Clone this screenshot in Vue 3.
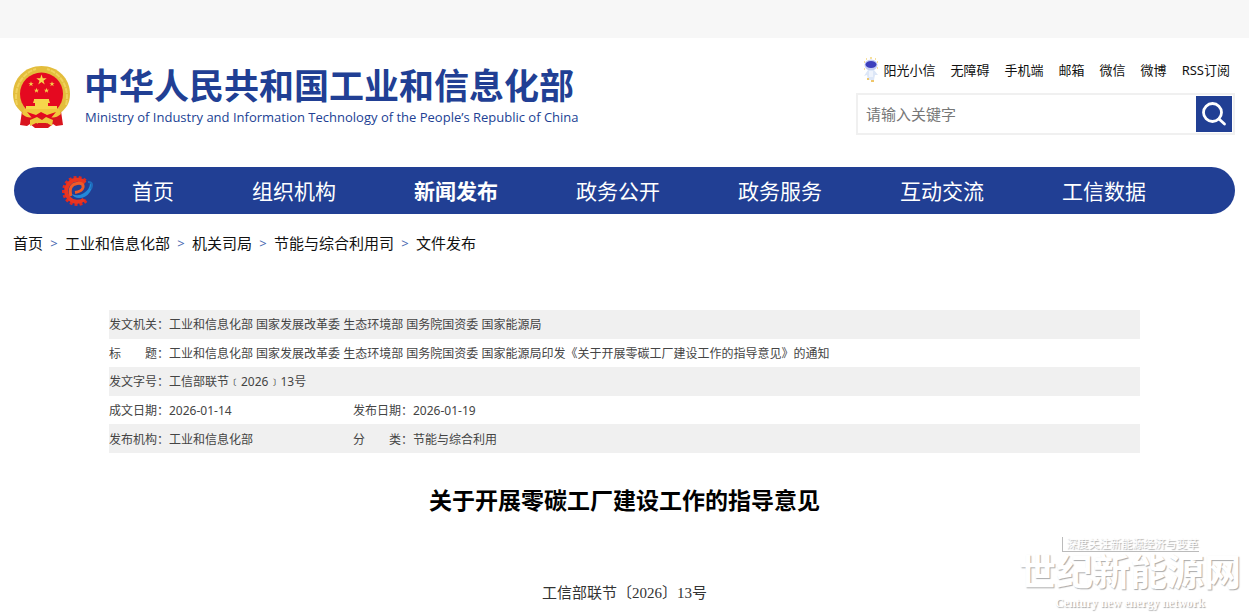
<script setup>
import { ref } from 'vue'

const keyword = ref('')
const tools = ['无障碍', '手机端', '邮箱', '微信', '微博', 'RSS订阅']
const menu = ['首页', '组织机构', '新闻发布', '政务公开', '政务服务', '互动交流', '工信数据']
const active = '新闻发布'
const crumbs = ['首页', '工业和信息化部', '机关司局', '节能与综合利用司', '文件发布']
const teeth = Array.from({ length: 13 }, (_, i) => 52 + i * 21)
const star = 'M0-1L.23-.31H.95L.36.12.59.81 0 .38-.59.81-.36.12-.95-.31H-.23Z'
const rows = [
  [['发文机关：', '工业和信息化部 国家发展改革委 生态环境部 国务院国资委 国家能源局']],
  [['标　　题：', '工业和信息化部 国家发展改革委 生态环境部 国务院国资委 国家能源局印发《关于开展零碳工厂建设工作的指导意见》的通知']],
  [['发文字号：', '工信部联节﹝2026﹞13号']],
  [['成文日期：', '2026-01-14'], ['发布日期：', '2026-01-19']],
  [['发布机构：', '工业和信息化部'], ['分　　类：', '节能与综合利用']],
]
</script>

<template>
  <div class="page">
    <div class="topbar"></div>
    <header class="header">
      <a class="brand" href="#">
        <svg class="emblem" viewBox="0 0 57 62" aria-hidden="true">
          <path d="M9 45 7 59l7 1 3-2 5 4h13l5-4 3 2 7-1-2-14z" fill="#d9141e" />
          <path d="M28.500 0C12 0 0 12.500 0 28c0 9 4 15 10 19h37c6-4 10-10 10-19C57 12.500 45 0 28.500 0z" fill="#e3bd3c" />
          <path d="M4 39C0 22 9 7 23 3M53 39C57 22 48 7 34 3" fill="none" stroke="#f0d25c" stroke-width="2" stroke-dasharray="5 1" />
          <circle cx="28.500" cy="28" r="21.500" fill="#e50920" />
          <g fill="#f6d64b">
            <path :d="star" transform="translate(28.500 14) scale(5.500)" />
            <path :d="star" transform="translate(18 18) scale(2.800)" />
            <path :d="star" transform="translate(39 18) scale(2.800)" />
            <path :d="star" transform="translate(23.500 24.500) scale(2.800)" />
            <path :d="star" transform="translate(33.500 24.500) scale(2.800)" />
            <path d="M21 34v-1h15v1l1 3h-2v3h9v3H13v-3h9v-3h-2z" />
          </g>
          <path d="M11 43h35l2 5q-7 6-13 2-6-4-13 0-6 4-13-2z" fill="#f0c83d" />
          <path d="m14 46 9 3 5-3 6 3 9-3-5 6-10-2-9 2z" fill="#e50920" />
          <path d="m17 54 7-3 5 3 4-3 7 3-1 6-5-3-5 2-6-2-6 3z" fill="#eec63c" />
          <path d="M25 57h8v4h-8z" fill="#d9141e" />
        </svg>
        <span class="names">
          <span class="name-zh">中华人民共和国工业和信息化部</span>
          <span class="name-en">Ministry of Industry and Information Technology of the People’s Republic of China</span>
        </span>
      </a>
      <div class="aside">
        <nav class="tools" aria-label="工具">
          <a class="mascot-link" href="#">
            <svg class="mascot" viewBox="0 0 16 26" aria-hidden="true">
              <path d="M1 5h1M3 2h1M7 1h2M12 2h1M14 5h1M1 12h1M14 11h1" stroke="#f3d67c" stroke-width="1.500" />
              <ellipse cx="8" cy="8" rx="6.500" ry="5.500" fill="#c5cdf3" />
              <ellipse cx="8" cy="7.500" rx="5.500" ry="3.500" fill="#3c3fbd" />
              <path d="M5 13h6l4 5-3 0-1 5H5l-1-5-3 1z" fill="#dce6f7" />
              <path d="M6 14v6h4v-6" fill="#eef3fc" />
              <path d="M4 22h2M8 24h3" stroke="#efc66a" stroke-width="2" />
            </svg>
            阳光小信</a>
          <a v-for="t in tools" :key="t" href="#">{{ t }}</a>
        </nav>
        <form class="search" role="search" @submit.prevent>
          <input v-model="keyword" type="text" aria-label="请输入关键字" placeholder="请输入关键字" />
          <button type="submit" aria-label="搜索">
            <svg viewBox="0 0 36 36" aria-hidden="true">
              <g fill="none" stroke="#fff" stroke-width="2.800" stroke-linecap="round">
                <circle cx="16.500" cy="16.500" r="9" />
                <path d="m23 23 5.500 5" />
              </g>
            </svg>
          </button>
        </form>
      </div>
    </header>

    <nav class="menu" aria-label="主导航">
      <svg class="gear" viewBox="0 0 32 32" aria-hidden="true">
        <g fill="#e02a20">
          <rect v-for="a in teeth" :key="a" x="27" y="14.500" width="4" height="3" :transform="`rotate(${a} 16 16)`" />
        </g>
        <path d="M23 24.500A11 11 0 1 1 24 8" fill="none" stroke="#ea3520" stroke-width="4" />
        <path d="M10 21Q7 10 16 8.500q7-1 6 4-1 4-8 5" fill="none" stroke="#f05a28" stroke-width="3" />
        <path d="M11 19q6 3 12-1 6-4 6-10 4 3 0 9-4 6-11 6-5 0-7-4z" fill="#2389d8" />
        <path d="M27 7q6 0 3 7" fill="none" stroke="#1e6dbd" stroke-width="2" />
      </svg>
      <a v-for="m in menu" :key="m" href="#" :class="{ active: m === active }">{{ m }}</a>
    </nav>

    <nav class="crumbs" aria-label="面包屑">
      <template v-for="(c, i) in crumbs" :key="c">
        <span v-if="i" class="sep">&gt;</span>
        <a href="#">{{ c }}</a>
      </template>
    </nav>

    <main class="article">
      <table class="info">
        <colgroup>
          <col class="c-label" />
          <col class="c-value" />
          <col class="c-label" />
          <col />
        </colgroup>
        <tbody>
          <tr v-for="row in rows" :key="row[0][0]">
            <template v-for="[k, v] in row" :key="k">
              <th scope="row">{{ k }}</th>
              <td :colspan="row.length === 1 ? 3 : 1">{{ v }}</td>
            </template>
          </tr>
        </tbody>
      </table>
      <h1>关于开展零碳工厂建设工作的指导意见</h1>
      <p class="docno">工信部联节〔2026〕13号</p>
    </main>

    <div class="watermark">
      <span class="wm-tag">深度关注新能源经济与变革</span>
      <span class="wm-name">世纪新能源网</span>
      <span class="wm-en">Century new energy network</span>
    </div>
  </div>
</template>

<style>
body {
  margin: 0;
  background: #fff;
}
</style>

<style scoped>
.page {
  position: relative;
  overflow: hidden;
  color: #111;
  font-family: "Noto Sans", "Noto Sans CJK SC", sans-serif;
}
a {
  color: inherit;
  text-decoration: none;
}
.topbar {
  height: 38px;
  background: #f7f7f7;
}
.header {
  display: flex;
  justify-content: space-between;
  align-items: flex-start;
  padding: 18px 14px 32px 13px;
}
.brand {
  display: flex;
  gap: 14px;
  padding-top: 10px;
  color: #213f94;
}
.emblem {
  width: 57px;
  height: 62px;
}
.names {
  display: flex;
  flex-direction: column;
}
.name-zh {
  font-family: "Liberation Sans", "Noto Sans CJK SC", sans-serif;
  font-size: 35px;
  font-weight: 700;
  line-height: 42px;
}
.name-en {
  padding-left: 1px;
  font: 500 13px/18px "Open Sans", sans-serif;
}
.tools {
  display: flex;
  justify-content: flex-end;
  gap: 15px;
  padding-right: 5px;
  font-size: 13px;
  line-height: 28px;
}
.mascot-link {
  display: flex;
  align-items: center;
  gap: 5px;
}
.mascot {
  width: 16px;
  height: 26px;
}
.search {
  display: flex;
  box-sizing: border-box;
  width: 379px;
  margin-top: 9px;
  border: 2px solid #f0f0f0;
}
.search input {
  flex: 1;
  min-width: 0;
  padding: 0 8px;
  border: 0;
  outline: 0;
  font: 15px "Noto Sans", "Noto Sans CJK SC", sans-serif;
}
.search input::placeholder {
  color: #777;
}
.search button {
  width: 36px;
  height: 36px;
  margin: 1px;
  padding: 0;
  border: 0;
  background: #213f94;
}
.search svg {
  display: block;
}
.menu {
  display: flex;
  align-items: center;
  gap: 78px;
  height: 47px;
  margin: 0 14px;
  padding-left: 47px;
  border-radius: 24px;
  background: #213f94;
  color: #fff;
  font-size: 21px;
  line-height: 28px;
  white-space: nowrap;
}
.gear {
  width: 32px;
  height: 32px;
  margin-right: -39px;
}
.active {
  font-weight: 700;
}
.crumbs {
  display: flex;
  margin: 16px 13px 0;
  font-size: 15px;
  line-height: 26px;
}
.sep {
  width: 22px;
  color: #4868b0;
  font-size: 13px;
  text-align: center;
}
.article {
  padding-top: 54px;
}
.info {
  width: calc(100% - 218px);
  height: 143px;
  margin: 0 auto;
  border-collapse: collapse;
  table-layout: fixed;
  color: #444;
  font-size: 12px;
  line-height: 20px;
}
.c-label {
  width: 60px;
}
.c-value {
  width: 184px;
}
.info tr:nth-child(odd) {
  background: #f0f0f0;
}
.info th,
.info td {
  padding: 2px 0 0;
  font-weight: 400;
  text-align: left;
  white-space: nowrap;
}
h1 {
  margin: 29px 0 0;
  color: #000;
  font-size: 23px;
  line-height: 36px;
  text-align: center;
}
.docno {
  margin: 63px 0 0;
  padding-bottom: 9px;
  color: #333;
  font: 15px/24px "Liberation Serif", "Noto Sans CJK SC", serif;
  text-align: center;
}
.watermark {
  position: absolute;
  right: 8px;
  bottom: 4px;
  display: flex;
  flex-direction: column;
  align-items: center;
  color: #fff;
  font-family: "Liberation Sans", "Noto Sans CJK SC", sans-serif;
  text-shadow: 1px 1px 1px #aaa;
}
.wm-tag {
  padding-left: 4px;
  border-left: 1px solid #bbb;
  border-bottom: 1px solid #bbb;
  font-size: 11px;
  line-height: 14px;
}
.wm-name {
  font-size: 37px;
  font-weight: 700;
  line-height: 44px;
}
.wm-en {
  font: 700 12px/14px "Liberation Serif", serif;
}
</style>
